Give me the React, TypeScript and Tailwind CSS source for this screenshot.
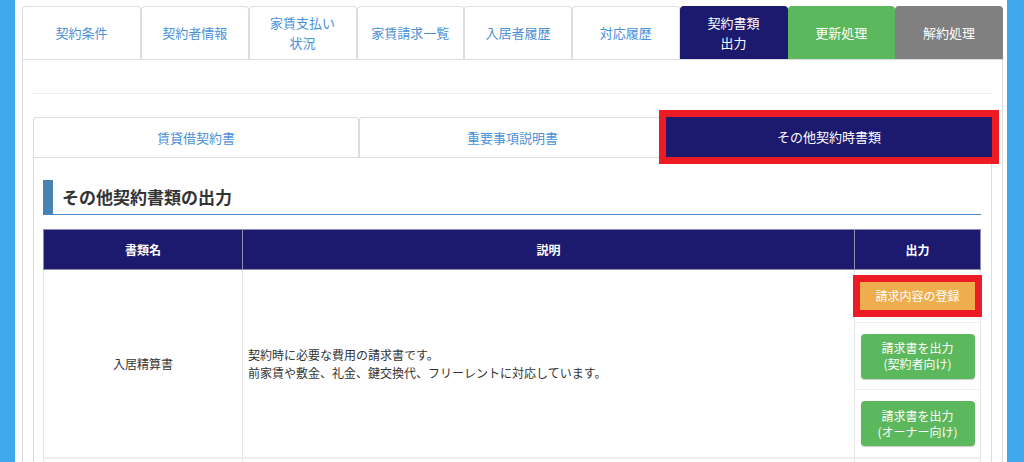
type Tone = "plain" | "active" | "green" | "gray";

const topTabs: { lines: string[]; tone: Tone }[] = [
  { lines: ["契約条件"], tone: "plain" },
  { lines: ["契約者情報"], tone: "plain" },
  { lines: ["家賃支払い", "状況"], tone: "plain" },
  { lines: ["家賃請求一覧"], tone: "plain" },
  { lines: ["入居者履歴"], tone: "plain" },
  { lines: ["対応履歴"], tone: "plain" },
  { lines: ["契約書類", "出力"], tone: "active" },
  { lines: ["更新処理"], tone: "green" },
  { lines: ["解約処理"], tone: "gray" },
];

const toneClass: Record<Tone, string> = {
  plain: "border-[#dddddd] bg-white text-[#4a90d9]",
  active: "border-[#1b1a6e] bg-[#1b1a6e] text-white",
  green: "border-[#5cb85c] bg-[#5cb85c] text-white",
  gray: "border-[#808080] bg-[#808080] text-white",
};

function GreenButton({ lines }: { lines: string[] }) {
  return (
    <button
      type="button"
      className="flex h-[45px] w-[114px] flex-col items-center justify-center rounded-[4px] bg-[#5cb85c] text-[12px] leading-[16px] text-white shadow-[0_1px_1px_rgba(0,0,0,0.2)]"
    >
      {lines.map((line) => (
        <span key={line}>{line}</span>
      ))}
    </button>
  );
}

export default function App() {
  return (
    <div className="flex min-h-screen bg-white font-['Noto_Sans_CJK_JP','Noto_Sans',sans-serif] text-[#333333]">
      <div className="w-[15px] shrink-0 bg-[#3da8ec]" />

      <main className="min-w-0 flex-1 pl-[7px] pr-[4px] pt-[6px]">
        {/* top tabs */}
        <div className="flex border-b border-[#dddddd]">
          {topTabs.map((tab, i) => (
            <div
              key={tab.lines.join("")}
              className={`flex h-[53px] flex-col items-center justify-center rounded-t-[4px] border border-b-0 text-[13px] leading-[20px] ${
                i === 0 ? "w-[119px] shrink-0" : "min-w-0 flex-1"
              } ${toneClass[tab.tone]}`}
            >
              {tab.lines.map((line) => (
                <span key={line}>{line}</span>
              ))}
            </div>
          ))}
        </div>

        <div className="border-x border-[#dddddd] px-[10px] pt-[33px]">
          <div className="border-t border-[#eeeeee]" />

          {/* inner tabs */}
          <div className="mt-[23px] flex border-b border-[#dddddd]">
            <div className="flex h-[40px] w-[326px] shrink-0 items-center justify-center rounded-t-[3px] border border-b-0 border-[#dddddd] text-[13px] text-[#4a90d9]">
              賃貸借契約書
            </div>
            <div className="flex h-[40px] min-w-0 flex-1 items-center justify-center rounded-t-[3px] border border-b-0 border-[#dddddd] text-[13px] text-[#4a90d9]">
              重要事項説明書
            </div>
            <div className="relative z-10 flex h-[40px] w-[326px] shrink-0 items-center justify-center bg-[#1b1a6e] text-[13px] text-white outline-[7px] outline-[#ed1c24] outline-solid">
              その他契約時書類
            </div>
          </div>

          <div className="border-x border-[#dddddd] pl-[9px] pr-[10px] pt-[22px]">
            <h2 className="flex h-[35px] items-center border-b border-l-[10px] border-b-[#4a8bc9] border-l-[#4682b4] pl-[9px] text-[17px] font-bold text-[#333333]">
              その他契約書類の出力
            </h2>

            <table className="mt-[14px] w-full table-fixed border-collapse text-[12px]">
              <colgroup>
                <col className="w-[199px]" />
                <col />
                <col className="w-[126px]" />
              </colgroup>
              <thead>
                <tr className="h-[40px] bg-[#1b1a6e] text-white">
                  <th className="border border-[#8e8db0] font-bold">書類名</th>
                  <th className="border border-[#8e8db0] font-bold">説明</th>
                  <th className="border border-[#8e8db0] font-bold">出力</th>
                </tr>
              </thead>
              <tbody>
                <tr className="h-[188px]">
                  <td className="border border-[#e5e5e5] text-center">入居精算書</td>
                  <td className="border border-[#e5e5e5] px-[5px] leading-[18px]">
                    契約時に必要な費用の請求書です。
                    <br />
                    前家賃や敷金、礼金、鍵交換代、フリーレントに対応しています。
                  </td>
                  <td className="border border-[#e5e5e5] p-0 align-top">
                    <div className="flex h-[53px] items-center justify-center border-b border-[#eeeeee]">
                      <button
                        type="button"
                        className="relative z-10 h-[28px] w-[115px] rounded-none bg-[#f0ad4e] text-[12px] text-white outline-[7px] outline-[#ed1c24] outline-solid"
                      >
                        請求内容の登録
                      </button>
                    </div>
                    <div className="flex h-[67px] items-center justify-center border-b border-[#eeeeee]">
                      <GreenButton lines={["請求書を出力", "(契約者向け)"]} />
                    </div>
                    <div className="flex h-[67px] items-center justify-center">
                      <GreenButton lines={["請求書を出力", "(オーナー向け)"]} />
                    </div>
                  </td>
                </tr>
                <tr className="h-[60px]">
                  <td className="border border-t-2 border-[#e5e5e5] border-t-[#eeeeee]" />
                  <td className="border border-t-2 border-[#e5e5e5] border-t-[#eeeeee]" />
                  <td className="border border-t-2 border-[#e5e5e5] border-t-[#eeeeee]" />
                </tr>
              </tbody>
            </table>
          </div>
        </div>
      </main>

      <div className="w-[17px] shrink-0 bg-[#3da8ec]" />
    </div>
  );
}
